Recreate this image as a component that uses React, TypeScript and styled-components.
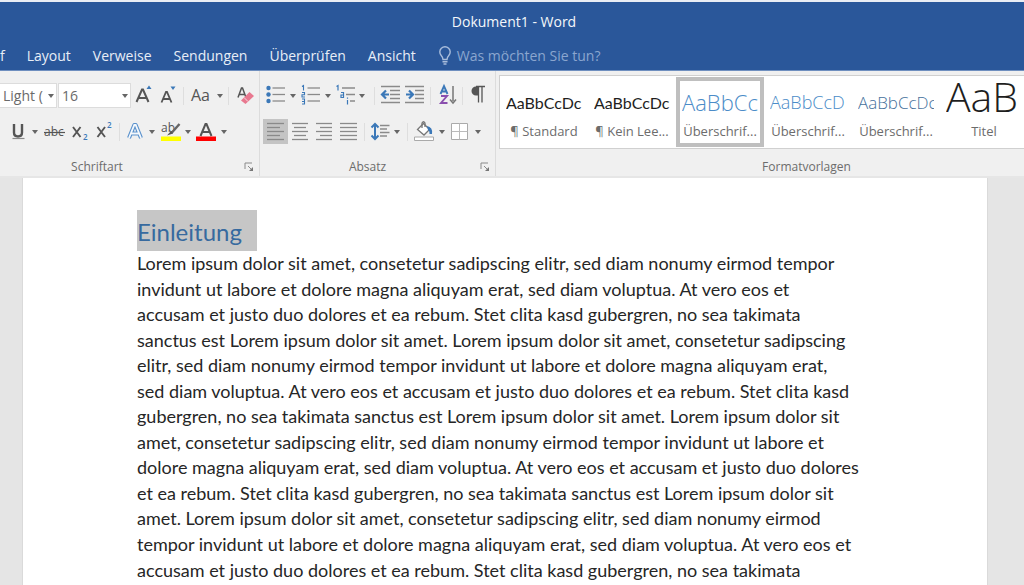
import React from "react";
import styled, { createGlobalStyle, css } from "styled-components";

const GlobalStyle = createGlobalStyle`
  * { box-sizing: border-box; }
  body { margin: 0; background: #e5e5e5; font-family: "Open Sans", "Noto Sans", sans-serif; }
  button, select { font: inherit; margin: 0; }
`;

const ui = {
  blue: "#2a579a",
  ribbon: "#f0f0f0",
  line: "#dcdcdc",
  ink: "#555555",
  rule: "#8a8a8a",
  accent: "#3b78b8",
};

const Window = styled.div`
  display: flex;
  flex-direction: column;
  height: 100vh;
  overflow: hidden;
`;

const Header = styled.header`
  flex: none;
  border-top: 2px solid #e9edf4;
  border-bottom: 1px solid #6f8fbf;
  background: ${ui.blue};
  color: #e8eef7;
  font-size: 14px;
`;

const TitleBar = styled.div`
  height: 40px;
  line-height: 40px;
  padding-left: 4px;
  text-align: center;
  color: #f4f7fb;
`;

const TabBar = styled.nav`
  display: flex;
  align-items: center;
  gap: 22px;
  height: 28px;
  padding-bottom: 1px;
`;

const Tab = styled.button`
  flex: none;
  padding: 0;
  border: 0;
  background: none;
  color: inherit;
  line-height: 20px;
`;

const TellMe = styled(Tab)`
  display: flex;
  align-items: center;
  gap: 5px;
  color: #8ba6cf;
`;

const Ribbon = styled.div`
  display: flex;
  flex: none;
  height: 107px;
  background: ${ui.ribbon};
  border-bottom: 2px solid #e6e6e6;
`;

const Group = styled.section<{ $grow?: boolean }>`
  display: flex;
  flex-direction: column;
  flex: ${(p) => (p.$grow ? "1 1 0" : "none")};
  min-width: 0;
  ${(p) =>
    !p.$grow &&
    css`
      border-right: 1px solid ${ui.line};
    `}
`;

const ToolRows = styled.div<{ $end?: number }>`
  display: flex;
  flex-direction: column;
  gap: 11px;
  padding: 12px ${(p) => p.$end ?? 2}px 0 0;
`;

const ToolRow = styled.div<{ $indent?: number }>`
  display: flex;
  align-items: center;
  height: 25px;
  padding-left: ${(p) => p.$indent ?? 0}px;
`;

const Tool = styled.button<{ $w: number; $active?: boolean }>`
  display: flex;
  flex: none;
  width: ${(p) => p.$w}px;
  height: 25px;
  padding: 0;
  border: 0;
  background: ${(p) => (p.$active ? "#c4c4c4" : "none")};
  color: ${ui.ink};
  svg { display: block; font-family: "Open Sans", sans-serif; }
`;

const Divider = styled.span`
  flex: none;
  width: 1px;
  height: 18px;
  margin: 0 3px;
  background: #dedede;
`;

const SelectBox = styled.label<{ $w: number; $open?: boolean }>`
  display: flex;
  align-items: center;
  flex: none;
  width: ${(p) => p.$w}px;
  height: 25px;
  margin-right: 1px;
  border: 1px solid ${ui.line};
  border-left-width: ${(p) => (p.$open ? 0 : 1)}px;
  background: #fff;
`;

const Select = styled.select`
  appearance: none;
  flex: 1;
  min-width: 0;
  padding: 0 0 0 3px;
  border: 0;
  background: transparent;
  color: #6a6a6a;
  font-size: 14px;
  line-height: 22px;
`;

const GroupFooter = styled.footer<{ $before?: number; $after?: number }>`
  display: flex;
  align-items: center;
  height: 20px;
  margin-top: auto;
  padding: 2px 5px 0 ${(p) => p.$before ?? 0}px;
  color: #6c6c6c;
  font-size: 12px;
  line-height: 16px;
  h2 {
    flex: 1;
    margin: 0 ${(p) => p.$after ?? 0}px 0 0;
    font: inherit;
    text-align: center;
  }
`;

const Launcher = styled.button`
  width: 10px;
  height: 10px;
  padding: 0;
  border: 0;
  background: none;
  svg { display: block; }
`;

const Gallery = styled.div`
  display: flex;
  flex: none;
  height: 74px;
  margin: 4px 0 0 3px;
  padding: 1px 0;
  border: 1px solid #d0d0d0;
  border-right: 0;
  background: #fff;
  overflow: hidden;
`;

const StyleCard = styled.button<{ $active?: boolean }>`
  display: flex;
  flex-direction: column;
  flex: none;
  width: 88px;
  height: 70px;
  padding: ${(p) => (p.$active ? 0 : 4)}px 2px 0;
  border: 0 solid #bfbfbf;
  border-width: ${(p) => (p.$active ? 4 : 0)}px;
  background: #fff;
  overflow: hidden;
`;

const Sample = styled.span<{
  $size: number;
  $color: string;
  $light?: boolean;
  $leading?: number;
  $inset: number;
}>`
  display: block;
  flex: none;
  align-self: stretch;
  height: 40px;
  margin: 0 ${(p) => p.$inset}px;
  overflow: hidden;
  text-align: left;
  white-space: nowrap;
  color: ${(p) => p.$color};
  font-family: ${(p) => (p.$light ? '"Open Sans"' : "Lato")}, sans-serif;
  font-weight: ${(p) => (p.$light ? 300 : 400)};
  font-size: ${(p) => p.$size}px;
  line-height: ${(p) => p.$leading ?? 43}px;
`;

const StyleName = styled.span`
  display: block;
  width: 100%;
  color: #6c6c6c;
  font-size: 13px;
  line-height: 20px;
  text-align: center;
  white-space: nowrap;
`;

const Workspace = styled.main`
  flex: 1;
  min-height: 0;
  padding: 0 36px 0 22px;
  background: #e5e5e5;
  overflow: hidden;
`;

const Paper = styled.article`
  min-height: 100%;
  padding: 32px 100px 0 114px;
  border: solid #dadada;
  border-width: 0 1px;
  background: #fff;
  font-family: Lato, sans-serif;
`;

const Heading = styled.h1`
  width: fit-content;
  height: 41px;
  margin: 0;
  padding: 0 15px 0 0;
  background: #c6c6c6;
  color: #376a9f;
  font-size: 24px;
  font-weight: 400;
  line-height: 43px;
`;

const Paragraph = styled.p`
  margin: 0;
  color: #262626;
  font-size: 18px;
  line-height: 1.42;
  white-space: nowrap;
  span { display: block; }
`;

const Caret = () => (
  <svg width="10" height="25" viewBox="0 0 10 25" aria-hidden="true">
    <path d="M2 11h6l-3 4z" fill="#666" />
  </svg>
);

const CaretTool = ({ label, w = 10 }: { label: string; w?: number }) => (
  <Tool $w={w} aria-label={label}>
    <Caret />
  </Tool>
);

const Icon = ({ w, children }: { w: number; children: React.ReactNode }) => (
  <svg width={w} height="25" viewBox={`0 0 ${w} 25`} fill="none" aria-hidden="true">
    {children}
  </svg>
);

const Bars = ({ rows }: { rows: [number, number][] }) => (
  <g stroke={ui.rule} strokeWidth="1.3">
    {rows.map(([a, b], i) => (
      <path key={i} d={`M${a} ${4.5 + i * 4}H${b}`} />
    ))}
  </g>
);

const LaunchButton = ({ label }: { label: string }) => (
  <Launcher aria-label={label}>
    <svg width="10" height="10" viewBox="0 0 10 10" fill="none" aria-hidden="true">
      <path d="M1 7V1h7" stroke="#8a8a8a" />
      <path d="M4 4l3 3" stroke="#8a8a8a" />
      <path d="M9 5v4H5z" fill="#777" />
    </svg>
  </Launcher>
);

const tabs = ["f", "Layout", "Verweise", "Sendungen", "Überprüfen", "Ansicht"];

const cards = [
  { sample: "AaBbCcDc", name: "¶ Standard", size: 16, color: "#1e1e1e" },
  { sample: "AaBbCcDc", name: "¶ Kein Lee...", size: 16, color: "#1e1e1e" },
  { sample: "AaBbCc", name: "Überschrif...", size: 22, color: "#4b8cc8", light: true, active: true },
  { sample: "AaBbCcD", name: "Überschrif...", size: 18, color: "#4b8cc8", light: true },
  { sample: "AaBbCcDc", name: "Überschrif...", size: 17, color: "#46719c", light: true },
  { sample: "AaB", name: "Titel", size: 41, color: "#1e1e1e", light: true, leading: 30 },
];

const lines = [
  "Lorem ipsum dolor sit amet, consetetur sadipscing elitr, sed diam nonumy eirmod tempor",
  "invidunt ut labore et dolore magna aliquyam erat, sed diam voluptua. At vero eos et",
  "accusam et justo duo dolores et ea rebum. Stet clita kasd gubergren, no sea takimata",
  "sanctus est Lorem ipsum dolor sit amet. Lorem ipsum dolor sit amet, consetetur sadipscing",
  "elitr, sed diam nonumy eirmod tempor invidunt ut labore et dolore magna aliquyam erat,",
  "sed diam voluptua. At vero eos et accusam et justo duo dolores et ea rebum. Stet clita kasd",
  "gubergren, no sea takimata sanctus est Lorem ipsum dolor sit amet. Lorem ipsum dolor sit",
  "amet, consetetur sadipscing elitr, sed diam nonumy eirmod tempor invidunt ut labore et",
  "dolore magna aliquyam erat, sed diam voluptua. At vero eos et accusam et justo duo dolores",
  "et ea rebum. Stet clita kasd gubergren, no sea takimata sanctus est Lorem ipsum dolor sit",
  "amet. Lorem ipsum dolor sit amet, consetetur sadipscing elitr, sed diam nonumy eirmod",
  "tempor invidunt ut labore et dolore magna aliquyam erat, sed diam voluptua. At vero eos et",
  "accusam et justo duo dolores et ea rebum. Stet clita kasd gubergren, no sea takimata",
];

const FontGroup = () => (
  <Group>
    <ToolRows>
      <ToolRow>
        <SelectBox $w={57} $open>
          <Select aria-label="Schriftart" defaultValue="a">
            <option value="a">Light (</option>
          </Select>
          <Caret />
        </SelectBox>
        <SelectBox $w={73}>
          <Select aria-label="Schriftgrad" defaultValue="16">
            <option>16</option>
          </Select>
          <Caret />
        </SelectBox>
        <Tool $w={24} aria-label="Schriftgrad vergrößern">
          <Icon w={24}>
            <path d="M4.500 19L10 6.500h1L16.500 19M6.500 15h8" stroke={ui.ink} strokeWidth="2" />
            <path d="M14.500 6l2.500-3.500L19.500 6z" fill={ui.accent} />
          </Icon>
        </Tool>
        <Tool $w={24} aria-label="Schriftgrad verkleinern">
          <Icon w={24}>
            <path d="M5.500 19.500L10 9h1l4.500 10.500M7 16h7" stroke={ui.ink} strokeWidth="1.800" />
            <path d="M14.500 3.500h5L17 7z" fill={ui.accent} />
          </Icon>
        </Tool>
        <Divider />
        <Tool $w={28} aria-label="Groß-/Kleinschreibung">
          <Icon w={28}>
            <text x="4" y="18" fontSize="16" fill={ui.ink}>Aa</text>
          </Icon>
        </Tool>
        <CaretTool label="Optionen für Groß-/Kleinschreibung" />
        <Divider />
        <Tool $w={25} aria-label="Formatierung löschen">
          <Icon w={25}>
            <path d="M6 14.500L9.500 5h1L14 14.500M7.500 11.500h5.500" stroke={ui.ink} strokeWidth="1.500" />
            <path d="M9 17.500L17.500 9l4.500 4-8.500 8z" fill="#e8788f" />
            <path d="M12 14.500l4 4" stroke="#f8dbe1" />
          </Icon>
        </Tool>
      </ToolRow>
      <ToolRow $indent={6}>
        <Tool $w={24} aria-label="Unterstrichen">
          <Icon w={24}>
            <path d="M8 5v8.500q0 4 4 4t4-4V5" stroke={ui.ink} strokeWidth="2.400" />
            <path d="M6.500 19.500h12" stroke={ui.rule} strokeWidth="1.200" />
          </Icon>
        </Tool>
        <CaretTool label="Unterstreichungsarten" w={12} />
        <Tool $w={25} aria-label="Durchgestrichen">
          <Icon w={25}>
            <text x="2" y="17" fontSize="12" fill={ui.ink}>abc</text>
            <path d="M2 13.500h21" stroke={ui.ink} strokeWidth="1.200" />
          </Icon>
        </Tool>
        <Tool $w={25} aria-label="Tiefgestellt">
          <Icon w={25}>
            <path d="M6 8l7.500 10M13.500 8L6 18" stroke={ui.ink} strokeWidth="1.900" />
            <text x="16" y="21" fontSize="8" fontWeight="600" fill={ui.accent}>2</text>
          </Icon>
        </Tool>
        <Tool $w={24} aria-label="Hochgestellt">
          <Icon w={24}>
            <path d="M5.500 8L13 18M13 8L5.500 18" stroke={ui.ink} strokeWidth="1.900" />
            <text x="15" y="9" fontSize="8" fontWeight="600" fill={ui.accent}>2</text>
          </Icon>
        </Tool>
        <Divider />
        <Tool $w={24} aria-label="Texteffekte">
          <Icon w={24}>
            <path d="M6 19L11.300 6h1.400L18 19M8 14.500h8" stroke="#5a91cc" strokeWidth="4" strokeLinejoin="round" />
            <path d="M6 19L11.300 6h1.400L18 19M8 14.500h8" stroke="#f4f8fc" strokeWidth="1.800" />
          </Icon>
        </Tool>
        <CaretTool label="Texteffekte wählen" />
        <Tool $w={26} aria-label="Texthervorhebungsfarbe">
          <Icon w={26}>
            <text x="4" y="13" fontSize="12" fill={ui.ink}>ab</text>
            <path d="M22.500 5l-8 9" stroke="#666" strokeWidth="2.400" />
            <path d="M14 12l-4 4.500 6-2z" fill="#555" />
            <path d="M4 17.500h20v4.500H4z" fill="#ffff00" />
          </Icon>
        </Tool>
        <CaretTool label="Hervorhebungsfarbe wählen" />
        <Tool $w={26} aria-label="Schriftfarbe">
          <Icon w={26}>
            <path d="M7.500 17L12.500 5h1l5 12M9.500 13h7" stroke={ui.ink} strokeWidth="2" />
            <path d="M3 17.500h20v4.500H3z" fill="#ff0000" />
          </Icon>
        </Tool>
        <CaretTool label="Schriftfarbe wählen" />
      </ToolRow>
    </ToolRows>
    <GroupFooter $after={50}>
      <h2>Schriftart</h2>
      <LaunchButton label="Schriftart-Dialog" />
    </GroupFooter>
  </Group>
);

const ParagraphGroup = () => (
  <Group>
    <ToolRows $end={5}>
      <ToolRow $indent={3}>
        <Tool $w={25} aria-label="Aufzählungszeichen">
          <Icon w={25}>
            {[5, 11.5, 18].map((y) => (
              <g key={y}>
                <circle cx="5.500" cy={y} r="2.200" fill={ui.accent} />
                <path d={`M9.500 ${y}H22`} stroke={ui.rule} strokeWidth="1.300" />
              </g>
            ))}
          </Icon>
        </Tool>
        <CaretTool label="Aufzählungszeichen wählen" />
        <Tool $w={25} aria-label="Nummerierung">
          <Icon w={25}>
            {[5, 11.5, 18].map((y) => (
              <path key={y} d={`M9.500 ${y}H22`} stroke={ui.rule} strokeWidth="1.300" />
            ))}
            <path
              d="M4 3.500l1.500-1v5M4 9.500h2.500v2.300H4V14h3M4 16h2.500v5H4M4 18.500h2.500"
              stroke={ui.accent}
              strokeWidth="1.100"
            />
          </Icon>
        </Tool>
        <CaretTool label="Nummerierung wählen" />
        <Tool $w={24} aria-label="Liste mit mehreren Ebenen">
          <Icon w={24}>
            <path
              d="M3.500 3.500l1.500-1v5M8 9.500h2.500v5H8v-2.500h2.500M14.500 17v4.500M14.500 14.500v1.200"
              stroke={ui.accent}
              strokeWidth="1.200"
            />
            <path d="M9 5h13M13 11.500h9M17 18h5" stroke={ui.rule} strokeWidth="1.300" />
          </Icon>
        </Tool>
        <CaretTool label="Listenebene wählen" w={14} />
        <Divider />
        <Tool $w={25} aria-label="Einzug verkleinern">
          <Icon w={25}>
            <path d="M3 3.500h19M12 7.500h10M12 11.500h10M12 15.500h10M3 19.500h19" stroke={ui.rule} strokeWidth="1.300" />
            <path d="M5 11.500h6M8 7.500l-4 4 4 4" stroke={ui.accent} strokeWidth="2.200" />
          </Icon>
        </Tool>
        <Tool $w={24} aria-label="Einzug vergrößern">
          <Icon w={24}>
            <path d="M2 3.500h19M12 7.500h9M12 11.500h9M12 15.500h9M2 19.500h19" stroke={ui.rule} strokeWidth="1.300" />
            <path d="M3 11.500h6M6 7.500l4 4-4 4" stroke={ui.accent} strokeWidth="2.200" />
          </Icon>
        </Tool>
        <Divider />
        <Tool $w={25} aria-label="Sortieren">
          <Icon w={25}>
            <path d="M6.500 11L10 3l3.500 8M7.500 8.500h5" stroke={ui.accent} strokeWidth="1.900" />
            <path d="M7 13h6l-6 7h6.500" stroke="#8a4fae" strokeWidth="1.900" />
            <path d="M19 3v15M16 16.500l3 3.500 3-3.500" stroke="#777" strokeWidth="1.500" />
          </Icon>
        </Tool>
        <Divider />
        <Tool $w={24} aria-label="Formatierungszeichen anzeigen">
          <Icon w={24}>
            <path d="M12 3.500H10a4.500 4.500 0 0 0 0 9h2z" fill={ui.ink} />
            <path d="M10 3.500h9M12.500 3v16.500M16 3v16.500" stroke={ui.ink} strokeWidth="1.300" />
          </Icon>
        </Tool>
      </ToolRow>
      <ToolRow $indent={3}>
        <Tool $w={25} $active aria-label="Linksbündig">
          <Icon w={25}>
            <Bars rows={[[4, 21], [4, 17], [4, 21], [4, 17], [4, 21]]} />
          </Icon>
        </Tool>
        <Tool $w={25} aria-label="Zentriert">
          <Icon w={25}>
            <Bars rows={[[4, 20], [6, 18], [4, 20], [6, 18], [4, 20]]} />
          </Icon>
        </Tool>
        <Tool $w={24} aria-label="Rechtsbündig">
          <Icon w={24}>
            <Bars rows={[[3, 19], [7, 19], [3, 19], [7, 19], [3, 19]]} />
          </Icon>
        </Tool>
        <Tool $w={24} aria-label="Blocksatz">
          <Icon w={24}>
            <Bars rows={[[3, 20], [3, 20], [3, 20], [3, 20], [3, 20]]} />
          </Icon>
        </Tool>
        <Divider />
        <Tool $w={24} aria-label="Zeilenabstand">
          <Icon w={24}>
            <path d="M7 6v13M3.500 8.500L7 5l3.500 3.500M3.500 16.500L7 20l3.500-3.500" stroke={ui.accent} strokeWidth="2" />
            <path d="M12 6.500h9.500M12 10h7M12 13.500h9.500M12 17h7" stroke={ui.rule} strokeWidth="1.300" />
          </Icon>
        </Tool>
        <CaretTool label="Zeilenabstand wählen" w={12} />
        <Divider />
        <Tool $w={26} aria-label="Schattierung">
          <Icon w={26}>
            <path d="M6.500 10.500l6-6 6 6-5.500 5.500z" fill="#fff" stroke="#777" strokeWidth="1.300" />
            <path d="M11 9V4q1.500-2.500 3 0V8" stroke="#777" strokeWidth="1.300" />
            <path d="M16 7q6 1 5 8h-2.500q.5-3-1.500-4z" fill={ui.accent} />
            <path d="M3.500 18h19v3.500h-19z" fill="#fff" stroke="#aaa" />
          </Icon>
        </Tool>
        <CaretTool label="Schattierung wählen" w={12} />
        <Tool $w={24} aria-label="Rahmen">
          <Icon w={24}>
            <path d="M2.500 4.500h16v16h-16z" fill="#fff" stroke="#aaa" />
            <path d="M10.500 4.500v16M2.500 12.500h16" stroke="#bbb" />
          </Icon>
        </Tool>
        <CaretTool label="Rahmen wählen" />
      </ToolRow>
    </ToolRows>
    <GroupFooter $after={5}>
      <h2>Absatz</h2>
      <LaunchButton label="Absatz-Dialog" />
    </GroupFooter>
  </Group>
);

export default function App() {
  return (
    <Window>
      <GlobalStyle />
      <Header>
        <TitleBar>Dokument1 - Word</TitleBar>
        <TabBar>
          {tabs.map((t) => (
            <Tab key={t}>{t}</Tab>
          ))}
          <TellMe>
            <svg width="14" height="20" viewBox="0 0 14 20" fill="none" aria-hidden="true">
              <path
                d="M5 13.500q0-2-1.800-4a5.200 5.200 0 1 1 7.600 0Q9 11.500 9 13.500z"
                stroke="#a9bddc"
                strokeWidth="1.400"
              />
              <path d="M4.500 15.800h5M5.500 18h3" stroke="#a9bddc" strokeWidth="1.400" />
            </svg>
            Was möchten Sie tun?
          </TellMe>
        </TabBar>
      </Header>
      <Ribbon>
        <FontGroup />
        <ParagraphGroup />
        <Group $grow>
          <Gallery>
            {cards.map((c, i) => (
              <StyleCard key={i} $active={c.active}>
                <Sample
                  $size={c.size}
                  $color={c.color}
                  $light={c.light}
                  $leading={c.leading}
                  $inset={c.active ? 0 : 4}
                >
                  {c.sample}
                </Sample>
                <StyleName>{c.name}</StyleName>
              </StyleCard>
            ))}
          </Gallery>
          <GroupFooter $before={98}>
            <h2>Formatvorlagen</h2>
          </GroupFooter>
        </Group>
      </Ribbon>
      <Workspace>
        <Paper>
          <Heading>Einleitung</Heading>
          <Paragraph>
            {lines.map((l, i) => (
              <span key={i}>{l} </span>
            ))}
          </Paragraph>
        </Paper>
      </Workspace>
    </Window>
  );
}
